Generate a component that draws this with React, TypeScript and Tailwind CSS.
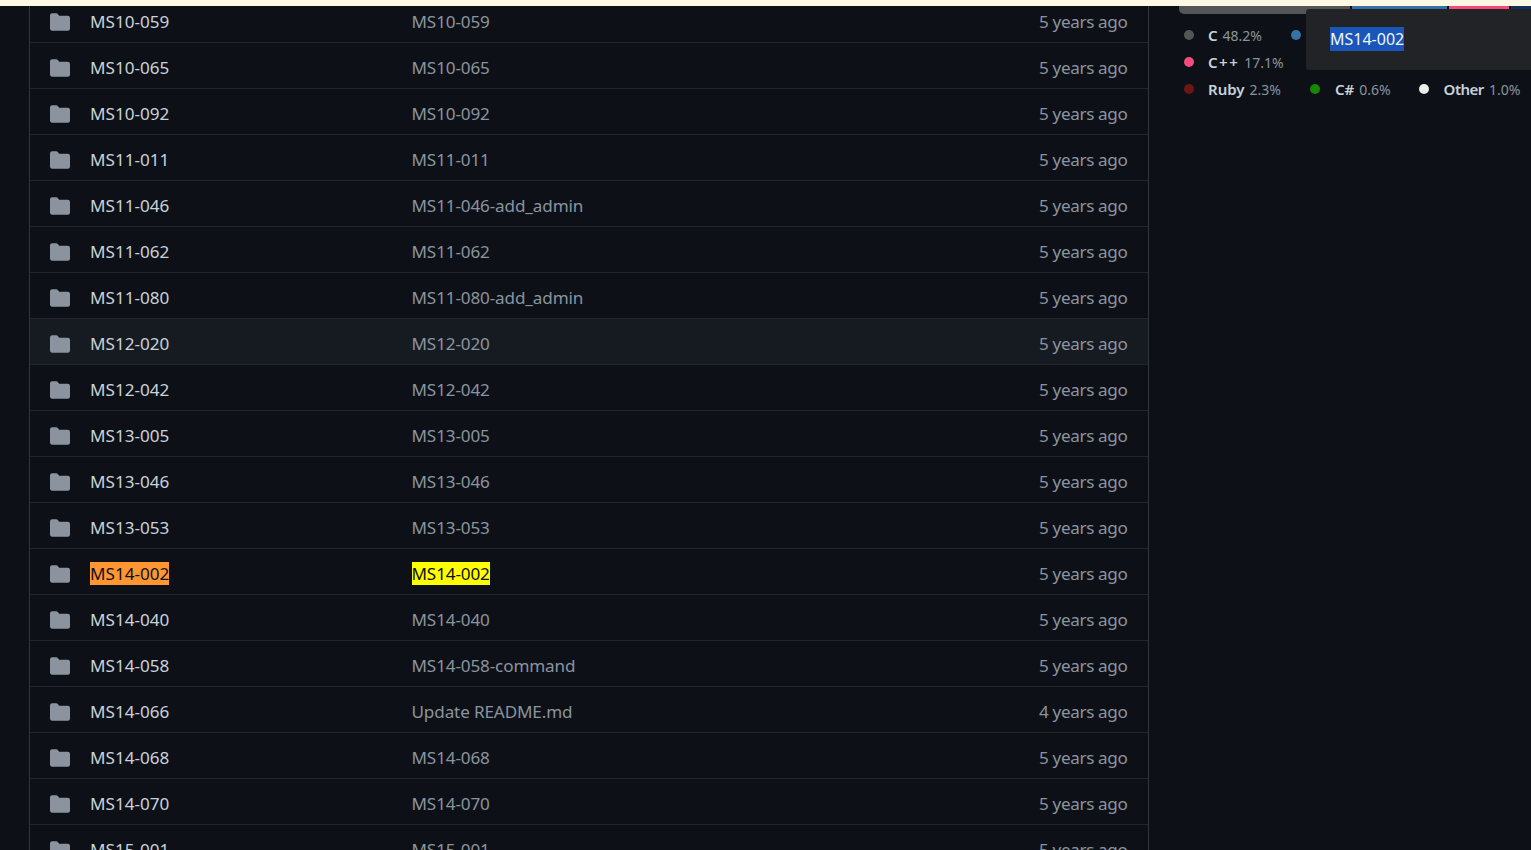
const font = { fontFamily: '"Noto Sans", "Open Sans", sans-serif' };

type Row = { name: string; message: string; age?: string; match?: boolean };

const rows: Row[] = [
  { name: 'MS10-059', message: 'MS10-059' },
  { name: 'MS10-065', message: 'MS10-065' },
  { name: 'MS10-092', message: 'MS10-092' },
  { name: 'MS11-011', message: 'MS11-011' },
  { name: 'MS11-046', message: 'MS11-046-add_admin' },
  { name: 'MS11-062', message: 'MS11-062' },
  { name: 'MS11-080', message: 'MS11-080-add_admin' },
  { name: 'MS12-020', message: 'MS12-020' },
  { name: 'MS12-042', message: 'MS12-042' },
  { name: 'MS13-005', message: 'MS13-005' },
  { name: 'MS13-046', message: 'MS13-046' },
  { name: 'MS13-053', message: 'MS13-053' },
  { name: 'MS14-002', message: 'MS14-002', match: true },
  { name: 'MS14-040', message: 'MS14-040' },
  { name: 'MS14-058', message: 'MS14-058-command' },
  { name: 'MS14-066', message: 'Update README.md', age: '4 years ago' },
  { name: 'MS14-068', message: 'MS14-068' },
  { name: 'MS14-070', message: 'MS14-070' },
  { name: 'MS15-001', message: 'MS15-001' },
];

function Folder() {
  return (
    <svg viewBox="0 0 16 16" className="h-5 w-5 shrink-0 fill-[#8b949e]">
      <path d="M1.75 1A1.75 1.75 0 0 0 0 2.75v10.5C0 14.216.784 15 1.75 15h12.5A1.75 1.75 0 0 0 16 13.25v-8.5A1.75 1.75 0 0 0 14.25 3H7.5a.25.25 0 0 1-.2-.1l-.9-1.2C6.07 1.26 5.55 1 5 1H1.75Z" />
    </svg>
  );
}

function FileRow({ row, hovered }: { row: Row; hovered: boolean }) {
  return (
    <div
      className={`flex h-[46px] shrink-0 items-center border-b border-[#21262d] pl-5 pr-[20.5px] pt-[4px] text-[17.1px] ${hovered ? 'bg-[#161b22]' : ''}`}
    >
      <Folder />
      <div className="ml-5 w-[321.5px] shrink-0 text-[#c9d1d9]">
        {row.match ? <span className="bg-[#ff9632] text-[#0d1117]">{row.name}</span> : row.name}
      </div>
      <div className="flex-1 tracking-[-0.13px] text-[#8b949e]">
        {row.match ? <span className="bg-[#ffff00] text-[#0d1117]">{row.message}</span> : row.message}
      </div>
      <div className="tracking-[-0.35px] text-[#8b949e]">{row.age ?? '5 years ago'}</div>
    </div>
  );
}

function Lang({
  color,
  name,
  pct,
  className,
  nameClass,
}: {
  color: string;
  name: string;
  pct: string;
  className?: string;
  nameClass?: string;
}) {
  return (
    <span className={`flex items-center whitespace-nowrap ${className ?? ''}`}>
      <span className="mr-[14px] h-[10px] w-[10px] rounded-full" style={{ backgroundColor: color }} />
      <span className={`text-[15px] font-semibold text-[#c9d1d9] ${nameClass ?? ''}`}>{name}</span>
      <span className="ml-[5px] text-[14px] text-[#8b949e]">{pct}</span>
    </span>
  );
}

export default function App() {
  return (
    <div className="relative h-[850px] w-[1531px] overflow-hidden bg-[#0d1117]" style={font}>
      <div className="absolute left-0 right-0 top-0 z-20 h-[6px] bg-[#fff8e5]" />

      <div className="flex">
        <div className="ml-[29px] mt-[-3px] flex w-[1120px] shrink-0 flex-col border-x border-[#30363d]">
          {rows.map((r) => (
            <FileRow key={r.name} row={r} hovered={r.name === 'MS12-020'} />
          ))}
        </div>

        <div className="ml-[30px] min-w-0 flex-1">
          <div className="mt-[6px] flex h-[8px] w-[352px] gap-[2px] overflow-hidden rounded-b-[5px]">
            <div className="w-[171px] bg-[#555555]" />
            <div className="w-[95px] bg-[#3572a5]" />
            <div className="w-[60px] bg-[#f34b7d]" />
            <div className="flex-1 bg-[#12325c]" />
          </div>
          <div className="mt-[11px] ml-[5px] flex flex-col gap-[7px]">
            <div className="flex h-5 items-center">
              <Lang color="#555555" name="C" pct="48.2%" />
              <span className="ml-[29px] h-[10px] w-[10px] rounded-full bg-[#3572a5]" />
            </div>
            <div className="flex h-5 items-center">
              <Lang color="#f34b7d" name="C++" pct="17.1%" nameClass="tracking-[1.5px]" />
            </div>
            <div className="flex h-5 items-center">
              <Lang color="#701516" name="Ruby" pct="2.3%" />
              <Lang color="#178600" name="C#" pct="0.6%" className="ml-[29px]" nameClass="ml-[1px]" />
              <Lang color="#ededed" name="Other" pct="1.0%" className="ml-[28px]" nameClass="ml-[1px] tracking-[-0.5px]" />
            </div>
          </div>
        </div>
      </div>

      <div className="absolute left-[1306px] top-[9px] z-10 flex h-[61px] w-[225px] items-center rounded-l-[3px] bg-[#212327] pb-[2px] pl-6 text-[16px] text-[#f0f6fc]">
        <span className="bg-[#1a56b8]">MS14-002</span>
      </div>
    </div>
  );
}
